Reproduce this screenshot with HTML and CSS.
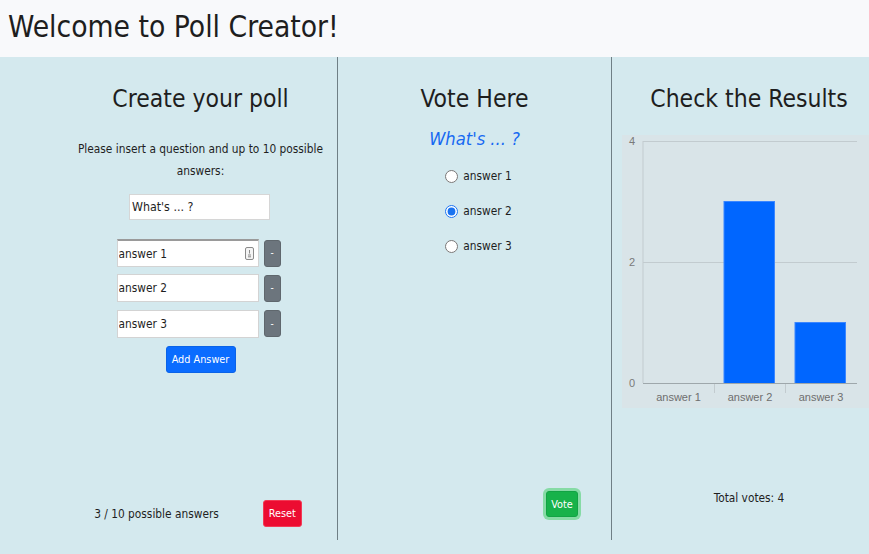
FILE: index.html
```html
<!DOCTYPE html>
<html lang="en">
<head>
<meta charset="utf-8">
<title>Poll Creator</title>
<link rel="stylesheet" href="styles.css">
</head>
<body>
<header class="topbar">
  <h1 class="title">Welcome to Poll Creator!</h1>
</header>
<main class="board">
  <div class="cols">
    <section class="col">
      <h2 class="col-title">Create your poll</h2>
      <p class="hint">Please insert a question and up to 10 possible answers:</p>
      <input class="question" type="text" value="What's ... ?">
      <div class="answers">
        <div class="answer-row">
          <div class="field">
            <input class="answer answer-focus" type="text" value="answer 1">
            <svg class="autofill" width="9" height="13" viewBox="0 0 9 13" aria-hidden="true">
              <rect x="0.5" y="0.5" width="8" height="12" rx="1.5" fill="#f4f4f4" stroke="#8a8a8a"/>
              <line x1="4.5" y1="3" x2="4.5" y2="6.5" stroke="#8a8a8a"/>
              <line x1="3" y1="8" x2="6" y2="8" stroke="#8a8a8a"/>
              <line x1="3" y1="9.8" x2="6" y2="9.8" stroke="#8a8a8a"/>
            </svg>
          </div>
          <button class="remove" type="button">-</button>
        </div>
        <div class="answer-row">
          <div class="field"><input class="answer" type="text" value="answer 2"></div>
          <button class="remove" type="button">-</button>
        </div>
        <div class="answer-row">
          <div class="field"><input class="answer" type="text" value="answer 3"></div>
          <button class="remove" type="button">-</button>
        </div>
      </div>
      <button class="btn btn-add" type="button">Add Answer</button>
      <div class="foot foot-create">
        <span class="count">3 / 10 possible answers</span>
        <button class="btn btn-reset" type="button">Reset</button>
      </div>
    </section>

    <section class="col">
      <h2 class="col-title">Vote Here</h2>
      <h3 class="poll-question">What's ... ?</h3>
      <form class="options">
        <label class="option"><input type="radio" name="vote"><span>answer 1</span></label>
        <label class="option"><input type="radio" name="vote" checked><span>answer 2</span></label>
        <label class="option"><input type="radio" name="vote"><span>answer 3</span></label>
      </form>
      <div class="foot foot-vote">
        <button class="btn btn-vote" type="button">Vote</button>
      </div>
    </section>

    <section class="col">
      <h2 class="col-title">Check the Results</h2>
      <div class="chart">
        <svg width="254" height="273" viewBox="0 0 254 273">
          <line x1="21" y1="6.5" x2="235" y2="6.5" stroke="#c2cbcf"/>
          <line x1="21" y1="127.5" x2="235" y2="127.5" stroke="#c2cbcf"/>
          <line x1="21" y1="6" x2="21" y2="248" stroke="#c2cbcf"/>
          <rect x="102" y="66.5" width="50.5" height="182" fill="#0066ff" stroke="#3b86ff"/>
          <rect x="173" y="187.5" width="50.5" height="61" fill="#0066ff" stroke="#3b86ff"/>
          <line x1="21" y1="248.5" x2="235" y2="248.5" stroke="#9ea7ab"/>
          <line x1="92.5" y1="249" x2="92.5" y2="258" stroke="#c2cbcf"/>
          <line x1="163.5" y1="249" x2="163.5" y2="258" stroke="#c2cbcf"/>
          <g class="ylab">
            <text x="13" y="10">4</text>
            <text x="13" y="131">2</text>
            <text x="13" y="252">0</text>
          </g>
          <g class="xlab">
            <text x="56.5" y="266">answer 1</text>
            <text x="128" y="266">answer 2</text>
            <text x="199" y="266">answer 3</text>
          </g>
        </svg>
      </div>
      <div class="foot foot-results">
        <span>Total votes: 4</span>
      </div>
    </section>
  </div>
</main>
</body>
</html>
```

FILE: styles.css
```css
html, body {
  margin: 0;
  height: 554px;
  overflow: hidden;
}

body {
  font-family: "DejaVu Sans Condensed", "Liberation Sans", sans-serif;
  font-size: 11.8px;
  color: #1e1e1e;
  background: #d4e9ee;
}

.topbar {
  box-sizing: border-box;
  height: 57px;
  padding: 4px 8px 0;
  background: #f8f9fb;
}

.title {
  margin: 0;
  font-size: 29.7px;
  font-weight: normal;
  line-height: 46px;
  white-space: nowrap;
}

.board {
  height: 497px;
  background: #d4e9ee;
}

.cols {
  display: flex;
  margin-left: 64px;
  width: 822px;
}

.col {
  box-sizing: border-box;
  flex: 0 0 274px;
  height: 483px;
  border-right: 1px solid #6f7f85;
  padding-top: 23.5px;
  display: flex;
  flex-direction: column;
  align-items: center;
}

.col:last-child {
  border-right: none;
}

.col-title {
  margin: 0;
  font-size: 24.5px;
  font-weight: normal;
  line-height: 36px;
  white-space: nowrap;
}

.hint {
  margin: 21.5px 0 0;
  max-width: 262px;
  text-align: center;
  line-height: 22px;
}

.question {
  box-sizing: border-box;
  margin-top: 12px;
  margin-right: 2px;
  width: 141px;
  height: 26px;
  padding: 0 2px;
  border: 1px solid #d6d6d6;
  background: #fff;
  font: inherit;
  font-size: 12.3px;
  color: #1e1e1e;
  outline: none;
}

.answers {
  margin-top: 19px;
  margin-right: 4px;
  display: flex;
  flex-direction: column;
  gap: 7.4px;
}

.answer-row {
  display: flex;
  align-items: center;
  gap: 5px;
}

.field {
  position: relative;
}

.answer {
  display: block;
  box-sizing: border-box;
  width: 142px;
  height: 28px;
  padding: 0 1px;
  border: 1px solid #d3d3d3;
  background: #fff;
  font: inherit;
  color: #1e1e1e;
  outline: none;
}

.answer-focus {
  border-top: 2px solid #9a9a9a;
}

.autofill {
  position: absolute;
  right: 5px;
  top: 8px;
}

.remove {
  box-sizing: border-box;
  width: 17px;
  height: 27px;
  padding: 0;
  border: 1px solid #5f676d;
  border-radius: 3px;
  background: #6c757d;
  color: #fff;
  font: inherit;
  font-size: 10px;
  line-height: 1;
}

.btn {
  box-sizing: border-box;
  border-radius: 3px;
  padding: 0;
  color: #fff;
  font: inherit;
  font-size: 10.8px;
  cursor: pointer;
}

.btn-add {
  margin-top: 8px;
  width: 70px;
  height: 27px;
  border: 1px solid #0a63e8;
  background: #0a6cff;
}

.foot {
  margin-top: auto;
  display: flex;
  align-items: center;
}

.foot-create {
  align-self: stretch;
  justify-content: center;
  gap: 44px;
  padding-right: 5px;
  margin-bottom: 13px;
}

.btn-reset {
  width: 39px;
  height: 27px;
  border: 1px solid #f23a55;
  background: #ec0c31;
}

.poll-question {
  margin: 9.2px 0 0;
  font-size: 18.2px;
  font-style: italic;
  font-weight: normal;
  line-height: 26px;
  color: #1769f2;
}

.options {
  margin-top: 7px;
  padding-left: 8px;
  display: flex;
  flex-direction: column;
}

.option {
  display: flex;
  align-items: center;
  gap: 5px;
  height: 35px;
}

.option input {
  margin: 0;
  width: 13px;
  height: 13px;
  accent-color: #1a73f0;
}

.foot-vote {
  align-self: stretch;
  justify-content: flex-end;
  padding-right: 33px;
  margin-bottom: 23px;
}

.btn-vote {
  width: 32px;
  height: 26px;
  border: 1px solid #12a344;
  background: #17b24a;
  box-shadow: 0 0 0 3px #86dba5;
}

.chart {
  margin-top: 18.9px;
  align-self: stretch;
  margin-left: 10px;
  height: 273px;
  background: #d9e4e8;
}

.chart svg {
  display: block;
}

.ylab text {
  font-family: "Liberation Sans", sans-serif;
  font-size: 11px;
  fill: #7a7a7a;
  text-anchor: end;
}

.xlab text {
  font-family: "Liberation Sans", sans-serif;
  font-size: 11px;
  fill: #6e6e6e;
  text-anchor: middle;
}

.foot-results {
  margin-bottom: 35px;
}
```
